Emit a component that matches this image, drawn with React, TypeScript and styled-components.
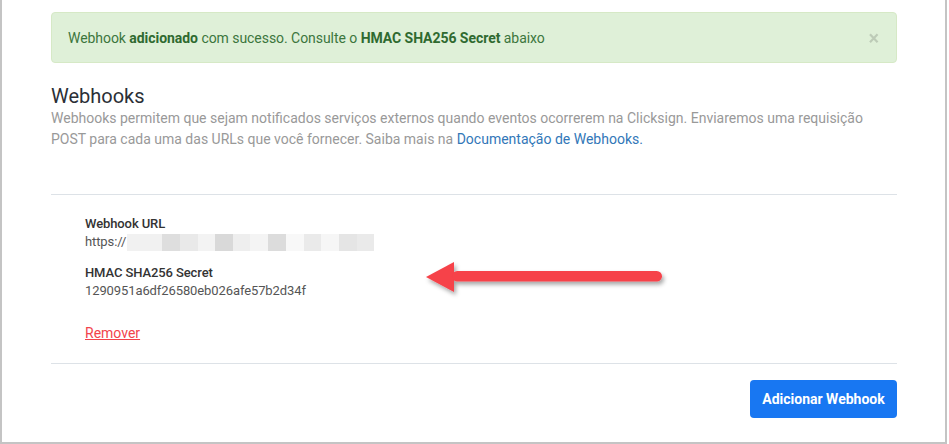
import styled, { createGlobalStyle } from "styled-components"

const GlobalStyle = createGlobalStyle`
  body {
    margin: 0;
    background: #fff;
    font-family: Roboto, "Liberation Sans", Arial, sans-serif;
  }
`

const Frame = styled.div`
  position: relative;
  box-sizing: border-box;
  width: 947px;
  height: 444px;
  border-left: 2px solid #c4c4c4;
  border-right: 2px solid #c4c4c4;
  border-bottom: 2px solid #c4c4c4;
  padding: 12px 48px 0 49px;
`

const Alert = styled.div`
  display: flex;
  align-items: center;
  justify-content: space-between;
  box-sizing: border-box;
  height: 51px;
  padding: 0 15px 0 16px;
  background: #dff0d8;
  border: 1px solid #d6e9c6;
  border-radius: 4px;
  color: #3c763d;
  font-size: 14px;
  letter-spacing: -0.05px;

  b {
    font-weight: 700;
    color: #2f6a30;
  }
`

const Close = styled.span`
  font-size: 20px;
  font-weight: 700;
  color: #000;
  opacity: 0.15;
  line-height: 1;
  margin-right: 2px;
`

const Title = styled.h2`
  margin: 21px 0 0;
  font-size: 20px;
  line-height: 24px;
  font-weight: 400;
  color: #2b2f36;
`

const Description = styled.p`
  margin: 0;
  font-size: 14px;
  line-height: 21px;
  color: #999;

  a {
    color: #3277b8;
    text-decoration: none;
  }
`

const Divider = styled.hr<{ $top: number }>`
  margin: ${(p) => p.$top}px 0 0;
  border: 0;
  border-top: 1px solid #dde2e7;
`

const Entry = styled.div`
  padding: 20px 0 0 34px;
`

const Field = styled.div`
  margin-bottom: 13px;
  font-size: 13px;
  line-height: 18px;
  letter-spacing: -0.1px;
`

const Label = styled.div`
  font-weight: 500;
  color: #333;
`

const Value = styled.div`
  display: flex;
  align-items: center;
  color: #555;
`

const Pixelated = styled.div`
  display: flex;
  height: 17px;
  margin-left: 1px;
`

const Pixel = styled.span<{ $shade: string; $w: number }>`
  width: ${(p) => p.$w}px;
  background: ${(p) => p.$shade};
`

const RemoveLink = styled.a`
  display: inline-block;
  margin-top: 10px;
  font-size: 14px;
  line-height: 20px;
  color: #f2434b;
  text-decoration: underline;
`

const Footer = styled.div`
  display: flex;
  justify-content: flex-end;
  padding-top: 16px;
`

const PrimaryButton = styled.button`
  box-sizing: border-box;
  width: 147px;
  height: 38px;
  border: 0;
  border-radius: 4px;
  background: #1877f2;
  color: #fff;
  font-family: Roboto, "Liberation Sans", Arial, sans-serif;
  font-weight: 700;
  font-size: 14px;
`

const ArrowLayer = styled.svg`
  position: absolute;
  left: 417px;
  top: 255px;
`

const pixels: [string, number][] = [
  ["#f1f1f1", 35],
  ["#dedede", 18],
  ["#e9e9e9", 18],
  ["#f3f3f3", 17],
  ["#d9d9d9", 18],
  ["#eeeeee", 17],
  ["#f4f4f4", 18],
  ["#dcdcdc", 18],
  ["#f8f8f8", 18],
  ["#eaeaea", 17],
  ["#f6f6f6", 18],
  ["#e5e5e5", 18],
  ["#eaeaea", 17],
]

export default function App() {
  return (
    <>
      <GlobalStyle />
      <Frame>
        <Alert>
          <span>
            Webhook <b>adicionado</b> com sucesso. Consulte o <b>HMAC SHA256 Secret</b> abaixo
          </span>
          <Close>×</Close>
        </Alert>
        <Title>Webhooks</Title>
        <Description>
          Webhooks permitem que sejam notificados serviços externos quando eventos ocorrerem na Clicksign. Enviaremos uma requisição POST para cada uma das URLs que você fornecer. Saiba mais na{" "}
          <a href="#">Documentação de Webhooks.</a>
        </Description>
        <Divider $top={44} />
        <Entry>
          <Field>
            <Label>Webhook URL</Label>
            <Value>
              https://
              <Pixelated>
                {pixels.map(([shade, w], i) => (
                  <Pixel key={i} $shade={shade} $w={w} />
                ))}
              </Pixelated>
            </Value>
          </Field>
          <Field>
            <Label>HMAC SHA256 Secret</Label>
            <Value>1290951a6df26580eb026afe57b2d34f</Value>
          </Field>
          <RemoveLink href="#">Remover</RemoveLink>
        </Entry>
        <Divider $top={20} />
        <Footer>
          <PrimaryButton>Adicionar Webhook</PrimaryButton>
        </Footer>
        <ArrowLayer width="260" height="50" viewBox="0 0 260 50">
          <defs>
            <filter id="shadow" x="-10%" y="-50%" width="120%" height="200%">
              <feDropShadow dx="2" dy="3" stdDeviation="2" floodColor="#000" floodOpacity="0.35" />
            </filter>
          </defs>
          <g filter="url(#shadow)" fill="#f6424a">
            <path d="M7 22 L35 7 L35 37 Z" />
            <rect x="33" y="16" width="210" height="10.5" rx="5.25" />
          </g>
        </ArrowLayer>
      </Frame>
    </>
  )
}
